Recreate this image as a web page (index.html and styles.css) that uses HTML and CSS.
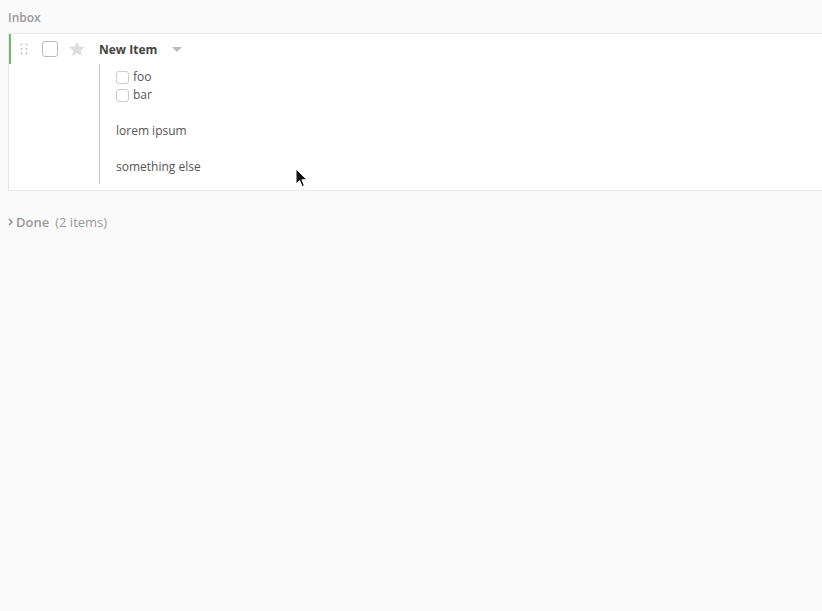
FILE: index.html
```html
<!DOCTYPE html>
<html lang="en">

<head>
    <meta charset="UTF-8">
    <meta name="viewport" content="width=device-width, initial-scale=1.0">
    <title>Inbox</title>
    <link rel="stylesheet" href="styles.css">
</head>

<body>

    <div class="section-title">Inbox</div>

    <div class="card">
        <div class="card-head">
            <svg class="handle" width="8" height="12" viewBox="0 0 8 12">
                <circle cx="1.5" cy="1.5" r="1" />
                <circle cx="6.5" cy="1.5" r="1" />
                <circle cx="1.5" cy="6" r="1" />
                <circle cx="6.5" cy="6" r="1" />
                <circle cx="1.5" cy="10.5" r="1" />
                <circle cx="6.5" cy="10.5" r="1" />
            </svg>
            <span class="check"></span>
            <svg class="star" width="18" height="18" viewBox="0 0 24 24">
                <path d="M12 2l3 6.8 7.3.6-5.5 4.8 1.7 7.2L12 17.6l-6.5 3.8 1.7-7.2-5.5-4.8 7.3-.6z" />
            </svg>
            <span class="title">New Item</span>
            <svg class="caret" width="10" height="6" viewBox="0 0 10 6">
                <path d="M0 0h10L5 5z" />
            </svg>
        </div>

        <div class="card-body">
            <div class="notes">
                <div class="todo"><span class="mini-check"></span>foo</div>
                <div class="todo"><span class="mini-check"></span>bar</div>
                <div class="blank"></div>
                <div>lorem ipsum</div>
                <div class="blank"></div>
                <div>something else</div>
            </div>
        </div>
    </div>

    <div class="done">
        <svg class="chevron" width="5" height="8" viewBox="0 0 5 8">
            <path d="M1 1l3 3-3 3" />
        </svg>
        <span class="done-label">Done</span>
        <span class="done-count">(2 items)</span>
    </div>

    <!-- mouse pointer from the screenshot -->
    <svg class="pointer" width="14" height="20" viewBox="0 0 14 20">
        <path d="M1 1v15l3.6-3.4 2.6 6 2.2-1-2.5-5.8H12z" />
    </svg>

</body>

</html>
```

FILE: styles.css
```css
body {
    margin: 0;
    padding: 0 0 0 8px;
    background-color: #fafafa;
    font-family: 'Open Sans', sans-serif;
    font-size: 12px;
    color: #555;
}

.section-title {
    height: 33px;
    line-height: 35px;
    font-weight: 600;
    color: #999;
}

.card {
    background-color: #fff;
    border: 1px solid #e8e8e8;
    border-right: none;
}

.card-head {
    display: flex;
    align-items: center;
    height: 30px;
    border-left: 2px solid #6ac163;
}

.handle {
    fill: #c4c4c4;
    margin-left: 9px;
}

.check {
    width: 14px;
    height: 14px;
    border: 1px solid #bbb;
    border-radius: 3px;
    margin-left: 14px;
}

.star {
    fill: #ddd;
    margin-left: 10px;
}

.title {
    font-size: 12px;
    font-weight: 700;
    color: #444;
    margin-left: 13px;
}

.caret {
    fill: #bbb;
    margin-left: 15px;
    margin-top: 1px;
}

.card-body {
    padding: 0 0 6px 90px;
}

.notes {
    border-left: 1px solid #ccc;
    padding: 4px 0 8px 16px;
    line-height: 18px;
}

.blank {
    height: 18px;
}

.todo {
    display: flex;
    align-items: center;
}

.mini-check {
    width: 11px;
    height: 11px;
    border: 1px solid #ccc;
    border-radius: 3px;
    margin-right: 4px;
}

.done {
    display: flex;
    align-items: center;
    margin-top: 22px;
    font-size: 13px;
    color: #999;
}

.chevron {
    fill: none;
    stroke: #888;
    stroke-width: 1.4;
    margin-right: 3px;
}

.done-label {
    font-weight: 600;
    margin-right: 6px;
}

.pointer {
    position: absolute;
    left: 295px;
    top: 168px;
    fill: #111;
    stroke: #fff;
    stroke-width: 1;
}
```
